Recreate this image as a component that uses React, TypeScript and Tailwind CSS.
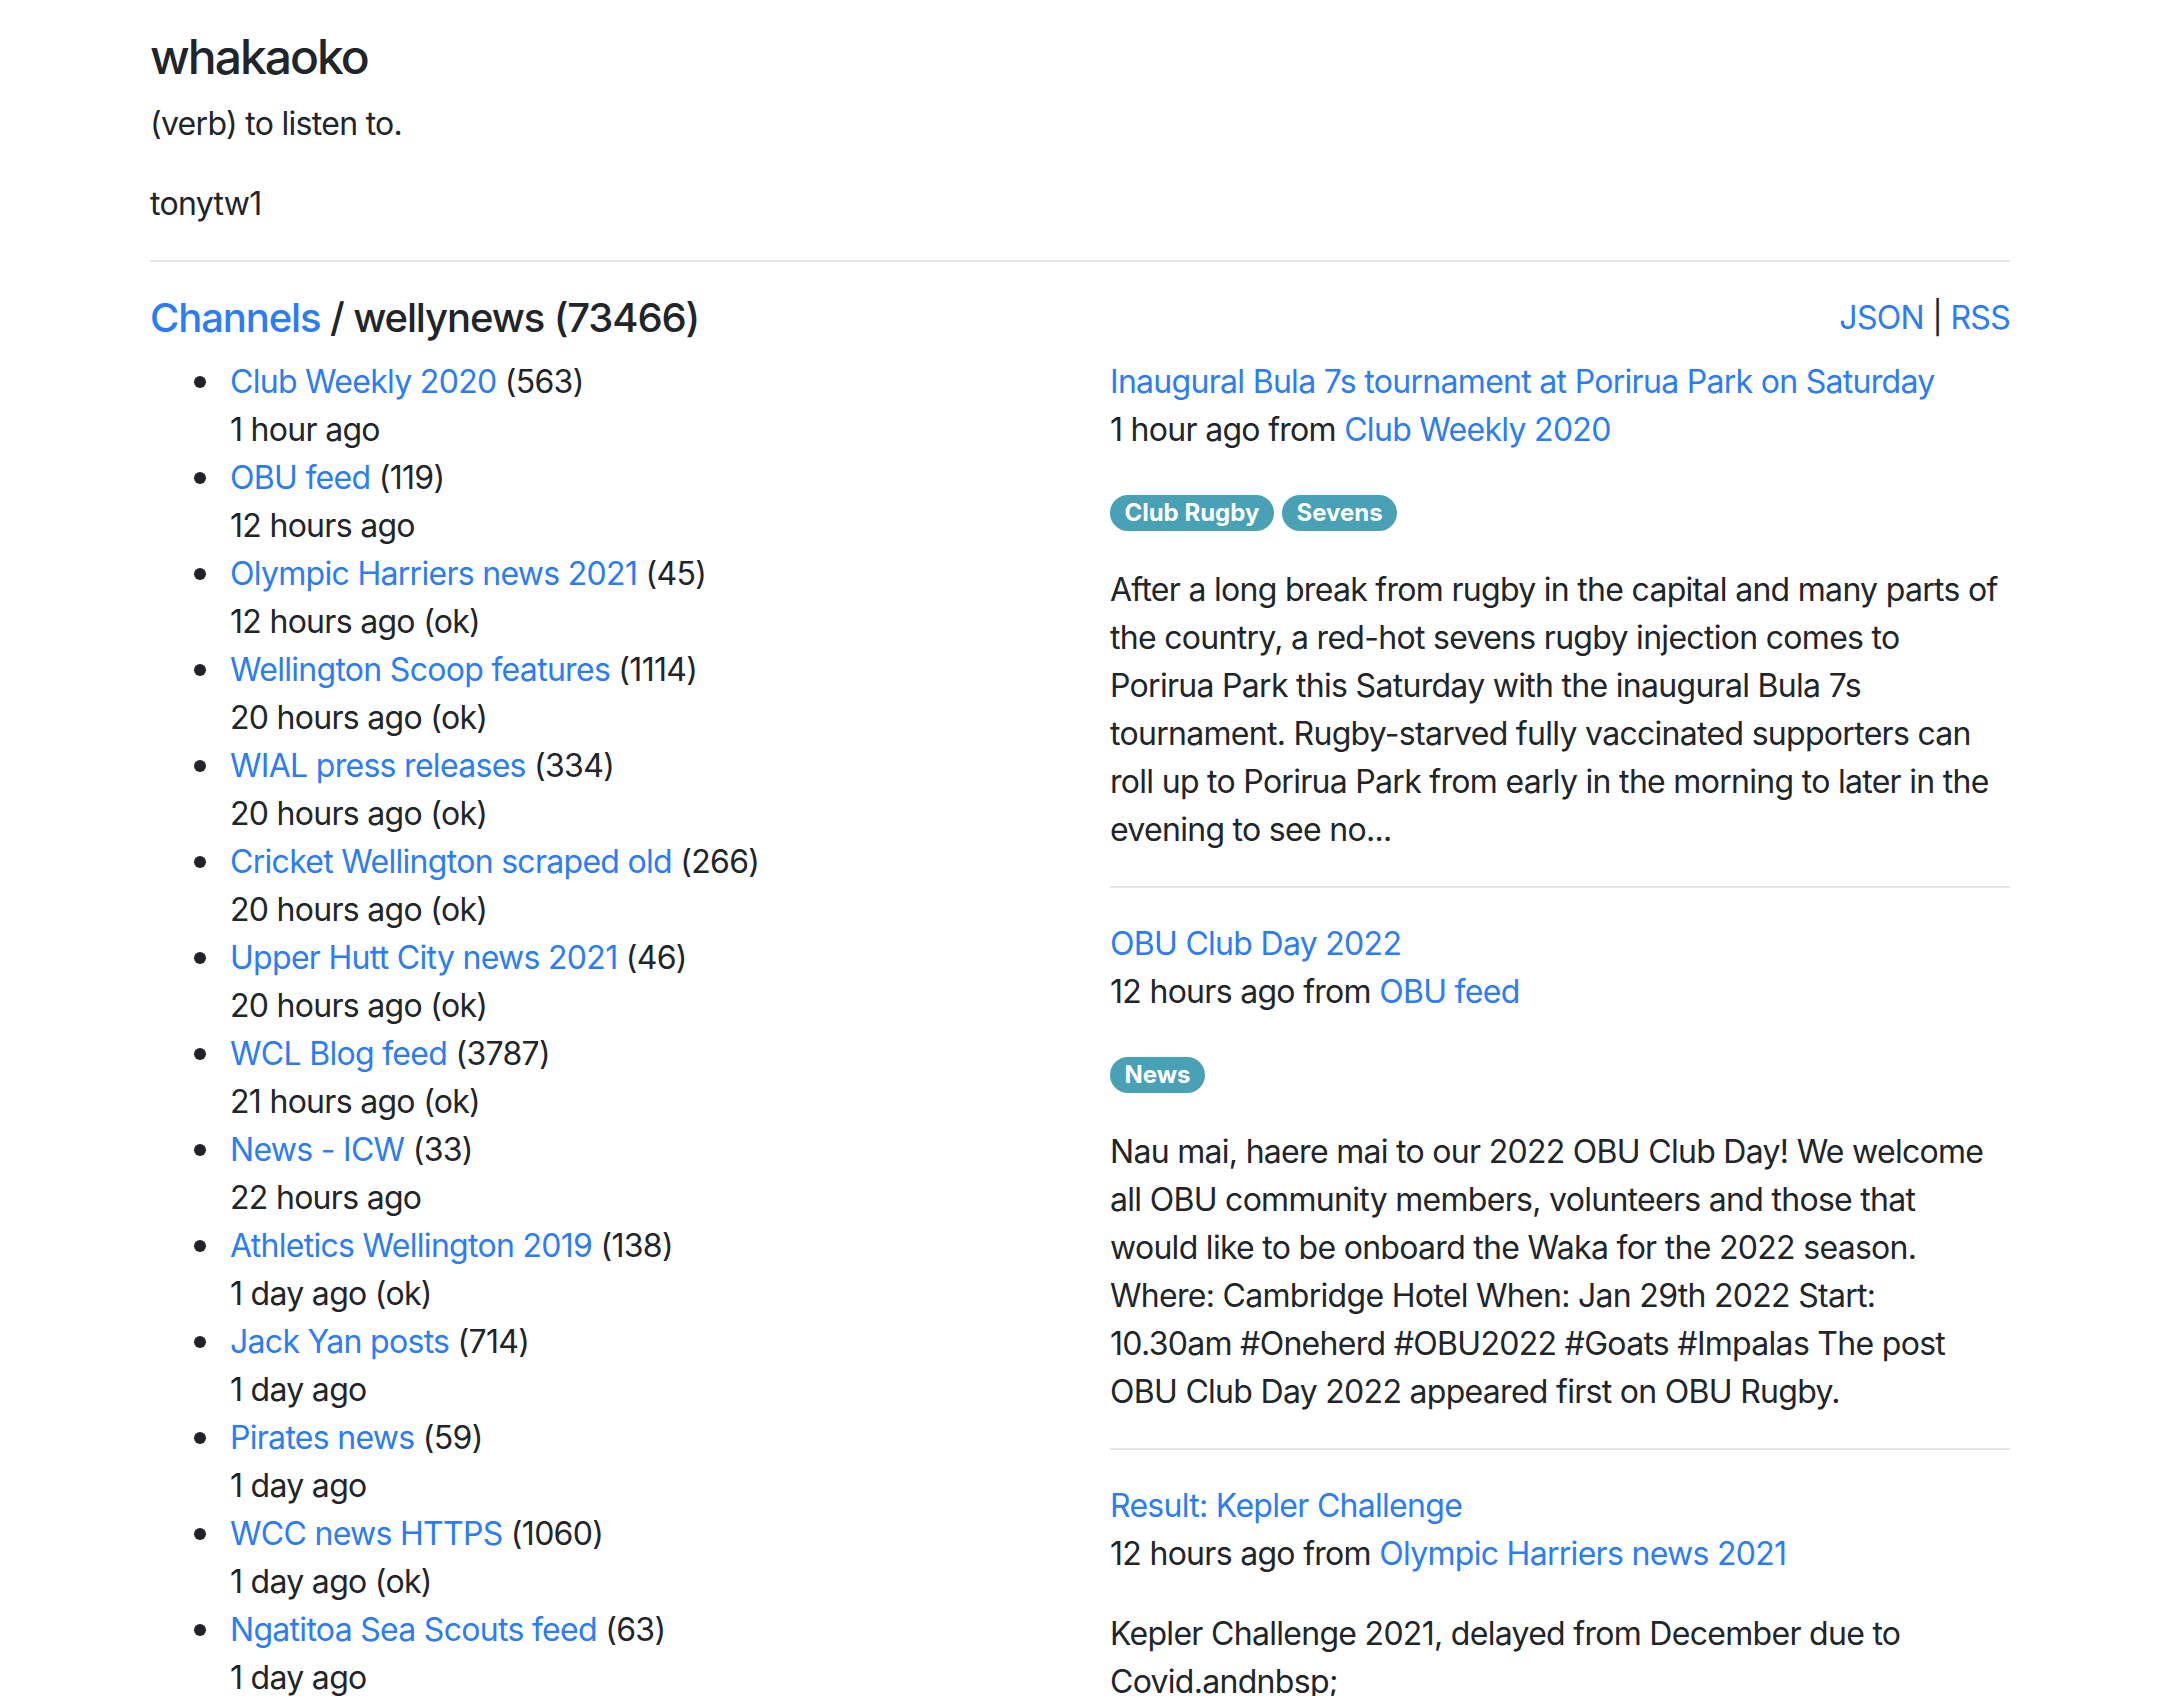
import React from "react";

const channels: { name: string; count: number; time: string }[] = [
  { name: "Club Weekly 2020", count: 563, time: "1 hour ago" },
  { name: "OBU feed", count: 119, time: "12 hours ago" },
  { name: "Olympic Harriers news 2021", count: 45, time: "12 hours ago (ok)" },
  { name: "Wellington Scoop features", count: 1114, time: "20 hours ago (ok)" },
  { name: "WIAL press releases", count: 334, time: "20 hours ago (ok)" },
  { name: "Cricket Wellington scraped old", count: 266, time: "20 hours ago (ok)" },
  { name: "Upper Hutt City news 2021", count: 46, time: "20 hours ago (ok)" },
  { name: "WCL Blog feed", count: 3787, time: "21 hours ago (ok)" },
  { name: "News - ICW", count: 33, time: "22 hours ago" },
  { name: "Athletics Wellington 2019", count: 138, time: "1 day ago (ok)" },
  { name: "Jack Yan posts", count: 714, time: "1 day ago" },
  { name: "Pirates news", count: 59, time: "1 day ago" },
  { name: "WCC news HTTPS", count: 1060, time: "1 day ago (ok)" },
  { name: "Ngatitoa Sea Scouts feed", count: 63, time: "1 day ago" },
];

const articles: { title: string; ago: string; from: string; tags: string[]; lines: string[] }[] = [
  {
    title: "Inaugural Bula 7s tournament at Porirua Park on Saturday",
    ago: "1 hour ago",
    from: "Club Weekly 2020",
    tags: ["Club Rugby", "Sevens"],
    lines: [
      "After a long break from rugby in the capital and many parts of",
      "the country, a red-hot sevens rugby injection comes to",
      "Porirua Park this Saturday with the inaugural Bula 7s",
      "tournament. Rugby-starved fully vaccinated supporters can",
      "roll up to Porirua Park from early in the morning to later in the",
      "evening to see no...",
    ],
  },
  {
    title: "OBU Club Day 2022",
    ago: "12 hours ago",
    from: "OBU feed",
    tags: ["News"],
    lines: [
      "Nau mai, haere mai to our 2022 OBU Club Day! We welcome",
      "all OBU community members, volunteers and those that",
      "would like to be onboard the Waka for the 2022 season.",
      "Where: Cambridge Hotel When: Jan 29th 2022 Start:",
      "10.30am #Oneherd #OBU2022 #Goats #Impalas The post",
      "OBU Club Day 2022 appeared first on OBU Rugby.",
    ],
  },
  {
    title: "Result: Kepler Challenge",
    ago: "12 hours ago",
    from: "Olympic Harriers news 2021",
    tags: [],
    lines: ["Kepler Challenge 2021, delayed from December due to", "Covid.andnbsp;"],
  },
];

const link = "text-[#2b7cf6] no-underline";

export default function App() {
  return (
    <div
      className="min-h-screen bg-white text-[#212529] text-[32px] leading-[48px] tracking-[-0.022em]"
      style={{ fontFamily: 'Inter, "Liberation Sans", sans-serif' }}
    >
      <div className="mx-auto w-[1920px] px-[30px] pt-[30px]">
        <h4 className="text-[48px] leading-[53.6px] font-medium tracking-[-0.042em] mb-4">whakaoko</h4>
        <p className="mb-8">(verb) to listen to.</p>
        <p className="mb-8">tonytw1</p>
        <hr className="border-0 border-t-2 border-[#e6e6e6] mb-8" />

        <div className="grid grid-cols-2 gap-x-[60px]">
          <div>
            <h5 className="text-[40px] leading-[48px] font-medium tracking-[-0.028em] mb-4">
              <a className={link} href="#">Channels</a> / wellynews (73466)
            </h5>
            <ul className="list-none pl-[80px]">
              {channels.map((c) => (
                <li key={c.name} className="relative">
                  <span className="absolute left-[-36px] top-[18px] w-3 h-3 rounded-full bg-[#212529]" />
                  <a className={link} href="#">{c.name}</a> ({c.count})
                  <br />
                  {c.time}
                </li>
              ))}
            </ul>
          </div>

          <div>
            <div className="text-right mb-4">
              <a className={link} href="#">JSON</a> | <a className={link} href="#">RSS</a>
            </div>
            {articles.map((a, i) => (
              <div key={a.title}>
                <p className="mb-8">
                  <a className={link} href="#">{a.title}</a>
                  <br />
                  {a.ago} from <a className={link} href="#">{a.from}</a>
                </p>
                {a.tags.length > 0 && (
                  <p className="mb-8">
                    {a.tags.map((t, j) => (
                      <React.Fragment key={t}>
                        {j > 0 && " "}
                        <span className="inline-block align-baseline rounded-full bg-[#48a1b5] text-white text-[24px] leading-none font-bold tracking-normal px-[14.4px] py-[6px]">
                          {t}
                        </span>
                      </React.Fragment>
                    ))}
                  </p>
                )}
                <p className="mb-8 whitespace-nowrap">
                  {a.lines.map((l, k) => (
                    <React.Fragment key={k}>
                      {k > 0 && <br />}
                      {l}
                    </React.Fragment>
                  ))}
                </p>
                {i < articles.length - 1 && (
                  <hr className="border-0 border-t-2 border-[#e6e6e6] mb-8" />
                )}
              </div>
            ))}
          </div>
        </div>
      </div>
    </div>
  );
}
